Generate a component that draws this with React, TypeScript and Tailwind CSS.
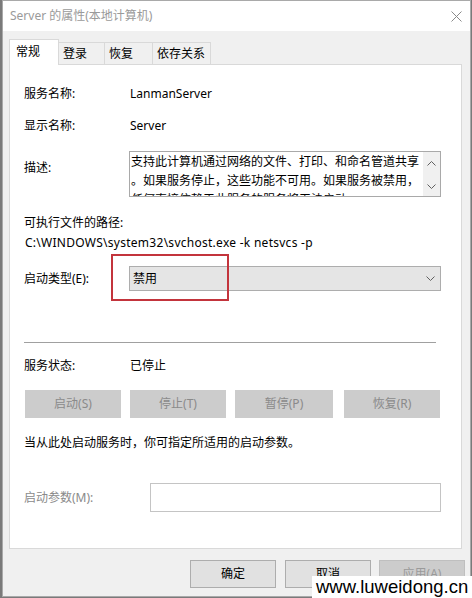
const font = { fontFamily: '"Noto Sans", "Noto Sans CJK SC", sans-serif' };

function Chevron({ up = false }: { up?: boolean }) {
  return (
    <svg width="9" height="5" viewBox="0 0 9 5" className="block">
      <path
        d={up ? 'M0.5 4.5 L4.5 0.5 L8.5 4.5' : 'M0.5 0.5 L4.5 4.5 L8.5 0.5'}
        fill="none"
        stroke="#606060"
        strokeWidth="1"
      />
    </svg>
  );
}

function Tab({ label, active, w }: { label: string; active?: boolean; w: string }) {
  if (active) {
    return (
      <div className={`${w} h-[26px] bg-white border border-b-0 border-[#d9d9d9] pl-[6px] pt-[4px] text-[12px] leading-[16px] text-black relative z-10 -mb-px`}>
        {label}
      </div>
    );
  }
  return (
    <div className={`${w} h-[22px] bg-[#f0f0f0] border border-l-0 border-b-0 border-[#d9d9d9] pl-[4px] pt-[3px] text-[12px] leading-[16px] text-black`}>
      {label}
    </div>
  );
}

function DisabledButton({ label, w, className = '' }: { label: string; w: string; className?: string }) {
  return (
    <div className={`${w} h-[28px] bg-[#cccccc] flex items-center justify-center text-[12px] text-[#8a8a8a] ${className}`}>
      {label}
    </div>
  );
}

const descLines = [
  '支持此计算机通过网络的文件、打印、和命名管道共享',
  '。如果服务停止，这些功能不可用。如果服务被禁用，',
  '任何直接依赖于此服务的服务将无法启动。',
];

export default function App() {
  return (
    <div className="w-[472px] h-[598px] bg-[#7a7a7a] overflow-hidden relative" style={font}>
      <div className="ml-[2px] w-[469px] h-[597px] border border-[#a9a9a9] bg-[#f0f0f0] flex flex-col">
        {/* Title bar */}
        <div className="h-[30px] bg-white flex items-center justify-between pl-[7px] pr-[8px] shrink-0">
          <span className="text-[12px] text-[#9a9a9a]">Server 的属性(本地计算机)</span>
          <svg width="11" height="11" viewBox="0 0 11 11">
            <path d="M0.5 0.5 L10.5 10.5 M10.5 0.5 L0.5 10.5" stroke="#8a8a8a" strokeWidth="1" />
          </svg>
        </div>

        {/* Tabs */}
        <div className="pl-[6px] pt-[8px] flex items-end">
          <Tab label="常规" active w="w-[50px]" />
          <Tab label="登录" w="w-[46px]" />
          <Tab label="恢复" w="w-[48px]" />
          <Tab label="依存关系" w="w-[58px]" />
        </div>

        {/* Panel */}
        <div className="ml-[6px] w-[453px] h-[485px] bg-white border border-[#d9d9d9] pl-[14px] pr-[19px] flex flex-col text-[12px] leading-[16px] text-black">
          <div className="flex mt-[21px]">
            <span className="w-[106px]">服务名称:</span>
            <span>LanmanServer</span>
          </div>
          <div className="flex mt-[16px]">
            <span className="w-[106px]">显示名称:</span>
            <span>Server</span>
          </div>
          <div className="flex mt-[17px]">
            <span className="w-[105px] mt-[9px]">描述:</span>
            <div className="w-[312px] h-[46px] border border-[#a9a9a9] flex overflow-hidden">
              <div className="flex-1 pl-[1px] leading-[19px] overflow-hidden">
                {descLines.map((line) => (
                  <div key={line} className="whitespace-nowrap">
                    {line}
                  </div>
                ))}
              </div>
              <div className="w-[17px] bg-[#f0f0f0] flex flex-col items-center justify-between pt-[9px] pb-[7px]">
                <Chevron up />
                <Chevron />
              </div>
            </div>
          </div>
          <div className="mt-[18px]">可执行文件的路径:</div>
          <div className="mt-[4px] pl-[1px] tracking-[0.27px]">C:\WINDOWS\system32\svchost.exe -k netsvcs -p</div>
          <div className="flex items-center mt-[15px] relative">
            <span className="w-[105px]">启动类型(E):</span>
            <div className="w-[312px] h-[25px] bg-[#e5e5e5] border border-[#adadad] flex items-center justify-between pl-[3px] pr-[5px]">
              <span>禁用</span>
              <Chevron />
            </div>
            <div className="absolute left-[87px] top-[-12px] w-[118px] h-[47px] border-2 border-[#c3343c] pointer-events-none" />
          </div>
          <div className="mt-[51px] w-[412px] h-px bg-[#a0a0a0]" />
          <div className="flex mt-[15px]">
            <span className="w-[106px]">服务状态:</span>
            <span>已停止</span>
          </div>
          <div className="flex mt-[16px] pl-[1px]">
            <DisabledButton label="启动(S)" w="w-[96px]" />
            <DisabledButton label="停止(T)" w="w-[96px]" className="ml-[9px]" />
            <DisabledButton label="暂停(P)" w="w-[98px]" className="ml-[9px]" />
            <DisabledButton label="恢复(R)" w="w-[96px]" className="ml-[11px]" />
          </div>
          <div className="mt-[17px]">当从此处启动服务时，你可指定所适用的启动参数。</div>
          <div className="flex items-center mt-[32px]">
            <span className="w-[126px] text-[#8a8a8a]">启动参数(M):</span>
            <div className="w-[291px] h-[29px] bg-white border border-[#c4c4c4]" />
          </div>
        </div>

        {/* Bottom buttons */}
        <div className="flex justify-end mt-[11px] pr-[5px] text-[12px]">
          <div className="w-[86px] h-[28px] bg-[#e1e1e1] border border-[#adadad] flex items-center justify-center text-black">确定</div>
          <div className="w-[86px] h-[28px] bg-[#e1e1e1] border border-[#adadad] flex items-center justify-center text-black ml-[9px]">取消</div>
          <div className="w-[86px] h-[28px] bg-[#cccccc] border border-[#bfbfbf] flex items-center justify-center text-[#9a9a9a] ml-[8px]">应用(A)</div>
        </div>
      </div>

      {/* Watermark */}
      <div className="absolute right-0 bottom-0 w-[160px] h-[22px] bg-white flex items-center pl-[4px]">
        <span className="text-[18.5px] leading-[22px] text-black" style={{ fontFamily: '"Liberation Sans", sans-serif' }}>
          www.luweidong.cn
        </span>
      </div>
    </div>
  );
}
